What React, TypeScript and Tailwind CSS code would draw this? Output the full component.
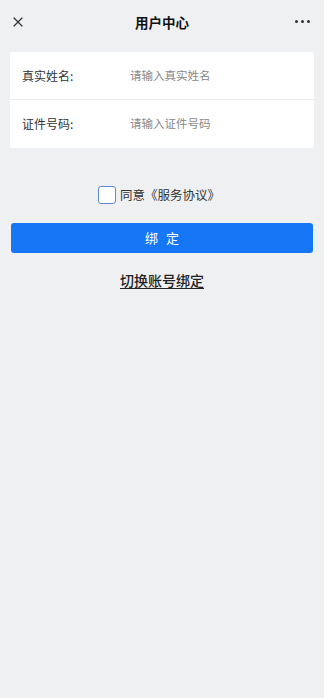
import { X } from 'lucide-react'

export default function App() {
  return (
    <div
      className="min-h-[698px] w-full bg-[#eff0f2] text-[#222]"
      style={{ fontFamily: '"Noto Sans CJK SC", "Noto Sans", sans-serif' }}
    >
      <header className="relative flex h-[44px] items-center justify-center">
        <X className="absolute left-[10px] top-[14px] h-[16px] w-[16px] text-[#333]" strokeWidth={1.8} />
        <h1 className="text-[13.5px] font-bold text-[#111]">用户中心</h1>
        <div className="absolute right-[14px] top-[20px] flex gap-[3px]">
          <span className="h-[3px] w-[3px] rounded-full bg-[#333]" />
          <span className="h-[3px] w-[3px] rounded-full bg-[#333]" />
          <span className="h-[3px] w-[3px] rounded-full bg-[#333]" />
        </div>
      </header>

      <div className="mx-[10px] mt-[8px] rounded-[3px] bg-white">
        <div className="flex h-[48px] items-center border-b border-[#ececec] pl-[12px]">
          <span className="w-[108px] text-[12px] text-[#333]">真实姓名:</span>
          <span className="text-[11.5px] text-[#888]">请输入真实姓名</span>
        </div>
        <div className="flex h-[48px] items-center pl-[12px]">
          <span className="w-[108px] text-[12px] text-[#333]">证件号码:</span>
          <span className="text-[11.5px] text-[#888]">请输入证件号码</span>
        </div>
      </div>

      <div className="mt-[38px] flex items-center justify-center gap-[4px] pr-[6px]">
        <span className="h-[18px] w-[18px] rounded-[3px] border-[1.5px] border-[#5b8bd6] bg-white" />
        <span className="text-[12.5px] text-[#333]">同意《服务协议》</span>
      </div>

      <button className="mx-[11px] mt-[18px] flex h-[30px] w-[302px] items-center justify-center rounded-[3px] bg-[#1677f6] text-[13px] tracking-[8px] text-white">
        <span className="pl-[8px]">绑定</span>
      </button>

      <div className="mt-[14px] text-center">
        <span className="text-[14px] font-medium text-[#222] underline underline-offset-2">切换账号绑定</span>
      </div>
    </div>
  )
}
